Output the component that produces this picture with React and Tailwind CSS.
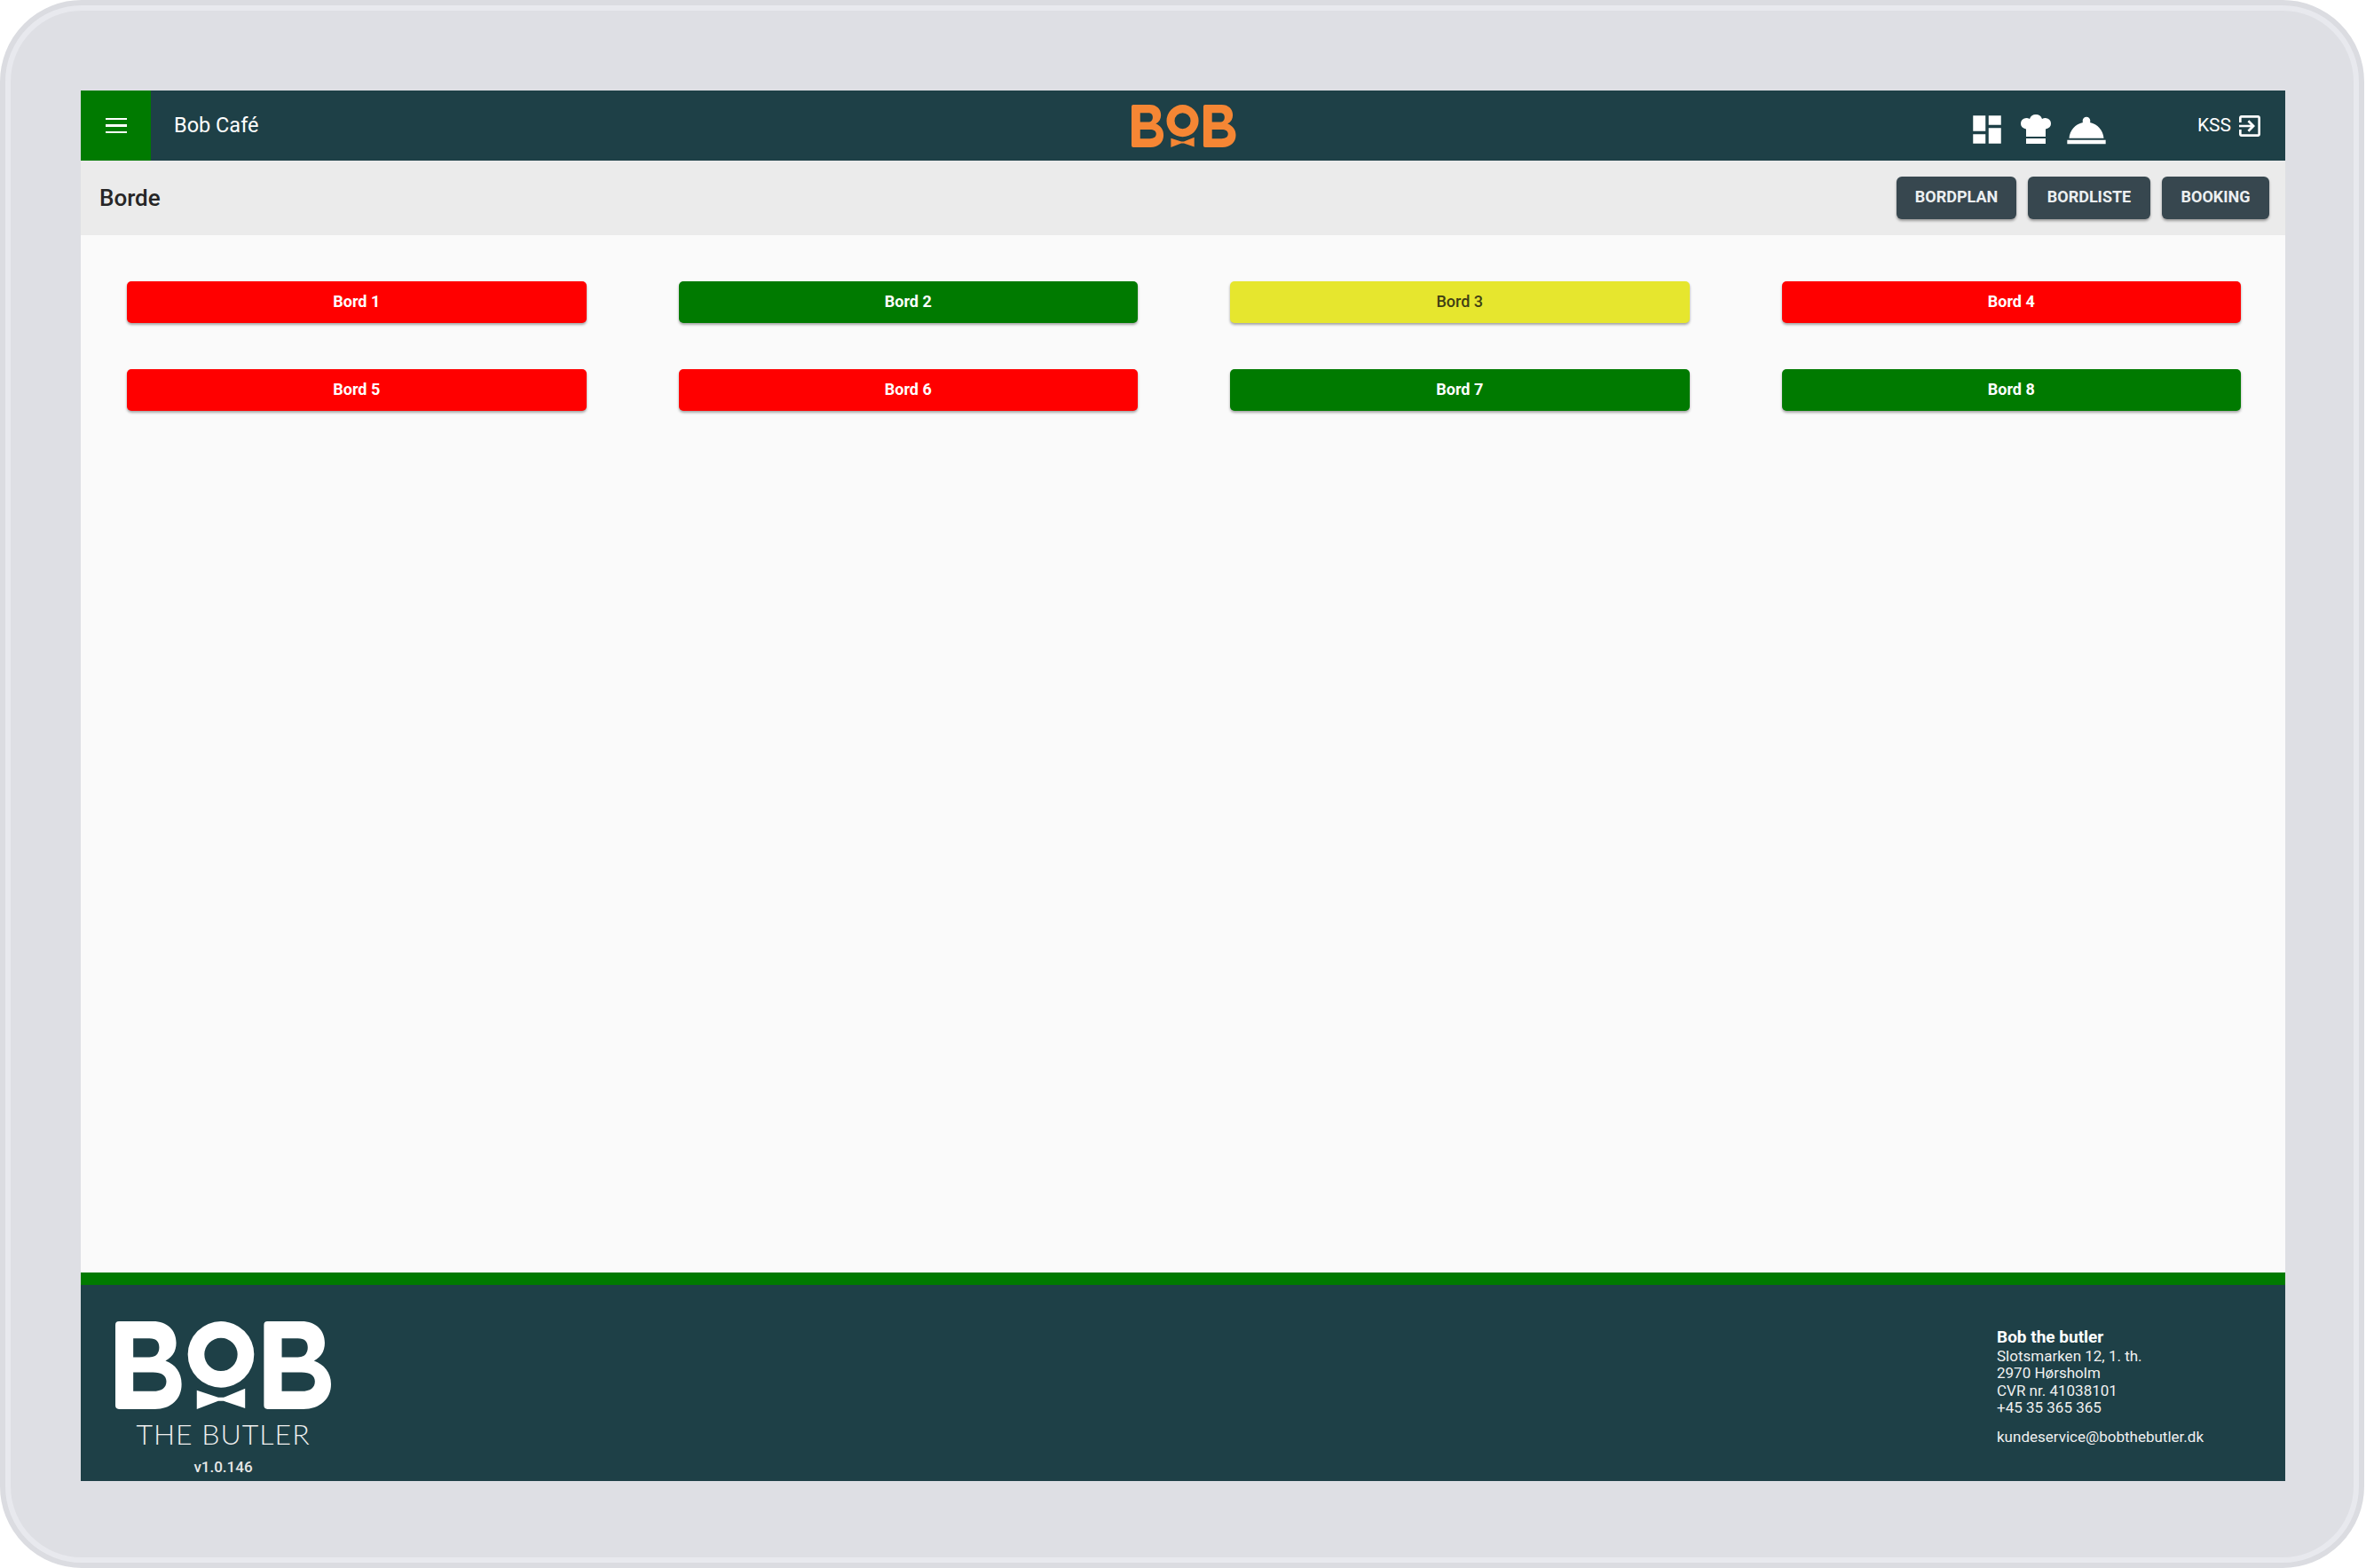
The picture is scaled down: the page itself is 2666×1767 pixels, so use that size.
const Logo = ({ fill, className }) => (
  <svg viewBox="0 0 242 98" className={className} fill={fill}>
    <path fillRule="evenodd" d="M4 0H42C58 0 68 10 68 24C68 33 64 40 56 44C67 48 74 57 74 70C74 87 62 98 44 98H4Q0 98 0 94V4Q0 0 4 0ZM20 19V40H38C46 40 49 35 49 29C49 23 46 19 38 19ZM20 57V78H42C52 78 57 74 57 67C57 61 52 57 42 57Z" />
    <path fillRule="evenodd" d="M118 0A37 37 0 1 1 118 74A37 37 0 1 1 118 0ZM118 18.500A18.500 18.500 0 1 0 118 55.500A18.500 18.500 0 1 0 118 18.500Z" />
    <path d="M91 77L115 85H121L145 75V97L121 89H115L91 98Z" />
    <g transform="translate(166 0)">
      <path fillRule="evenodd" d="M4 0H42C58 0 68 10 68 24C68 33 64 40 56 44C67 48 75 57 75 70C75 87 62 98 44 98H4Q0 98 0 94V4Q0 0 4 0ZM20 19V40H38C46 40 49 35 49 29C49 23 46 19 38 19ZM20 57V78H42C52 78 57 74 57 67C57 61 52 57 42 57Z" />
    </g>
  </svg>
);

const Icon = ({ d, className, box = "0 0 24 24" }) => (
  <svg viewBox={box} fill="currentColor" className={className}>
    <path d={d} />
  </svg>
);

const tables = [
  ["Bord 1", "bg-[#ff0000] text-white font-bold"],
  ["Bord 2", "bg-[#007a00] text-white font-bold"],
  ["Bord 3", "bg-[#e6e62e] text-[#3f3f14] font-medium"],
  ["Bord 4", "bg-[#ff0000] text-white font-bold"],
  ["Bord 5", "bg-[#ff0000] text-white font-bold"],
  ["Bord 6", "bg-[#ff0000] text-white font-bold"],
  ["Bord 7", "bg-[#007a00] text-white font-bold"],
  ["Bord 8", "bg-[#007a00] text-white font-bold"],
];

const actions = [
  ["BORDPLAN", "w-[135px]"],
  ["BORDLISTE", "w-[138px]"],
  ["BOOKING", "w-[121px]"],
];

export default function App() {
  return (
    <div className="w-[2666px] h-[1767px] bg-white overflow-hidden font-['Roboto',sans-serif]">
      <div className="w-[2664px] h-[1767px] rounded-[92px] border-[6px] border-[#dbdce1] bg-[#e8e9ee] p-[6px]">
        <div className="w-full h-full rounded-[80px] bg-[#dedfe4] pt-[90px] pl-[79px] pr-[77px]">
          <div className="flex flex-col h-[1567px]">
            <header className="h-[79px] bg-[#1e4047] flex items-center text-white shrink-0">
              <div className="flex-1 flex items-center h-full">
                <div className="w-[79px] h-full bg-[#007a00] flex items-center justify-center">
                  <div className="w-[24px] flex flex-col gap-[5px]">
                    <span className="h-[2.500px] bg-white block" />
                    <span className="h-[2.500px] bg-white block" />
                    <span className="h-[2.500px] bg-white block" />
                  </div>
                </div>
                <span className="ml-[26px] text-[23.500px]">Bob Café</span>
              </div>
              <Logo fill="#f58634" className="w-[118px] h-[48px] ml-[2px]" />
              <div className="flex-1 flex items-center justify-end">
                <Icon className="w-[42px] h-[42px] mt-[8px]" d="M3 13h8V3H3v10zm0 8h8v-6H3v6zm10 0h8V11h-8v10zm0-18v6h8V3h-8z" />
                <Icon box="0 0 34 33" className="w-[34px] h-[33px] ml-[17px] mt-[7px]" d="M17 0A7.500 7.500 0 0 1 24 5A6.500 6.500 0 0 1 34 10.500C34 13.500 32 15.500 28 16.500V25H6V16.500C2 15.500 0 13.500 0 10.500A6.500 6.500 0 0 1 10 5A7.500 7.500 0 0 1 17 0ZM6 27H28V33H6Z" />
                <Icon className="w-[52px] h-[52px] ml-[14px] mt-[10px]" d="M2 17h20v2H2zm11.840-9.210c.1-.24.16-.51.16-.79 0-1.100-.9-2-2-2s-2 .9-2 2c0 .28.06.55.16.79C6.250 8.600 3.270 11.930 3 16h18c-.27-4.070-3.250-7.400-7.160-8.210z" />
                <span className="ml-[99px] text-[21px]">KSS</span>
                <Icon className="w-[32px] h-[32px] ml-[5px] mr-[24px]" d="M10.090 15.590L11.500 17l5-5-5-5-1.410 1.410L12.670 11H3v2h9.670l-2.580 2.590zM19 3H5c-1.110 0-2 .9-2 2v4h2V5h14v14H5v-4H3v4c0 1.100.89 2 2 2h14c1.100 0 2-.9 2-2V5c0-1.100-.9-2-2-2z" />
              </div>
            </header>
            <div className="h-[84px] bg-[#ebebeb] flex items-center justify-between pl-[21px] pr-[18px] shrink-0">
              <h1 className="text-[26px] font-medium text-[#262626]">Borde</h1>
              <div className="flex gap-[13px]">
                {actions.map(([label, w]) => (
                  <button key={label} className={`${w} h-[48px] pb-[4px] rounded-[6px] bg-[#37474f] text-[#eceff1] text-[18px] font-bold shadow-[0_2px_3px_rgba(0,0,0,0.35)]`}>
                    {label}
                  </button>
                ))}
              </div>
            </div>
            <main className="flex-1 bg-[#fafafa] pt-[52px] pl-[52px] pr-[50px]">
              <div className="grid grid-cols-4 gap-x-[104px] gap-y-[52px]">
                {tables.map(([label, c]) => (
                  <button key={label} className={`${c} h-[47px] pb-[3px] rounded-[5px] text-[18px] shadow-[0_2px_3px_rgba(0,0,0,0.35)]`}>
                    {label}
                  </button>
                ))}
              </div>
            </main>
            <footer className="h-[235px] bg-[#1e4047] border-t-[14px] border-[#007a00] flex justify-between text-white shrink-0">
              <div className="w-[321px] flex flex-col items-center pt-[41px]">
                <Logo fill="#ffffff" className="w-[244px] h-[99px]" />
                <div className="mt-[13px] text-[32px] leading-[30px] font-light tracking-[1px] font-['Lato',sans-serif] text-[#eeeeee]">THE BUTLER</div>
                <div className="mt-[10px] text-[17px] font-medium text-[#e8e8e8]">v1.0.146</div>
              </div>
              <div className="w-[325px] pt-[47px] text-[#f0f0f0]">
                <div className="text-[19px] font-bold leading-[23.500px] text-white">Bob the butler</div>
                <div className="text-[17px] leading-[19.500px]">Slotsmarken 12, 1. th.</div>
                <div className="text-[17px] leading-[19.500px]">2970 Hørsholm</div>
                <div className="text-[17px] leading-[19.500px]">CVR nr. 41038101</div>
                <div className="text-[17px] leading-[19.500px]">+45 35 365 365</div>
                <div className="text-[17px] leading-[19.500px] mt-[13px]">kundeservice@bobthebutler.dk</div>
              </div>
            </footer>
          </div>
        </div>
      </div>
    </div>
  );
}
